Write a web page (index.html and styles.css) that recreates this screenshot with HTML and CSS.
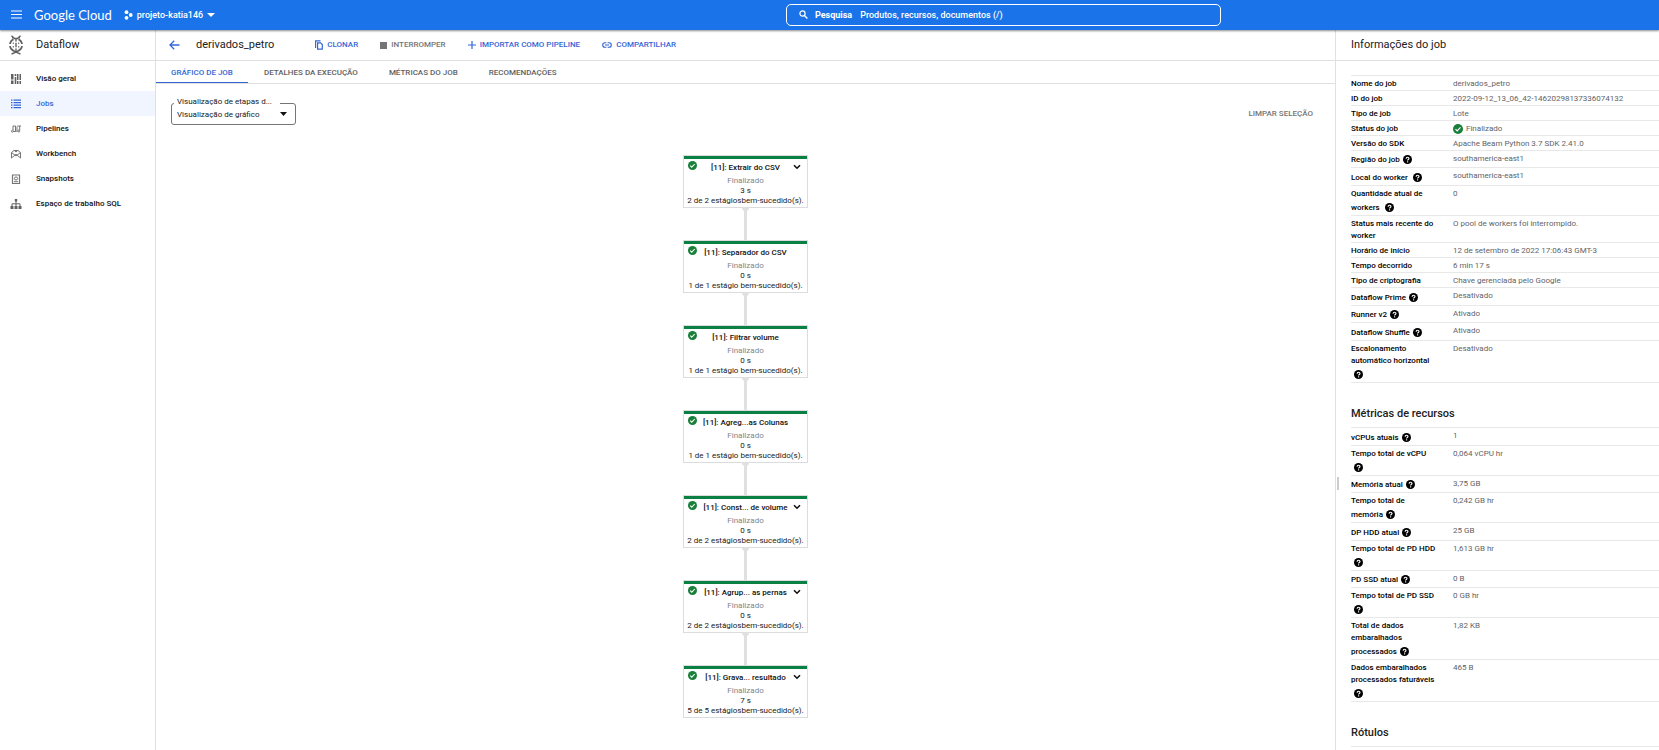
FILE: index.html
```html
<!DOCTYPE html>
<html lang="pt-BR">
<head>
<meta charset="utf-8">
<title>derivados_petro – Dataflow</title>
<link rel="stylesheet" href="styles.css">
</head>
<body>
<svg class="sprite" aria-hidden="true">
  <symbol id="ok" viewBox="0 0 24 24"><circle cx="12" cy="12" r="12" fill="#188038"/><path d="M6 12.500l4 4 8-8.500" fill="none" stroke="#fff" stroke-width="2.800"/></symbol>
  <symbol id="help" viewBox="0 0 24 24"><circle cx="12" cy="12" r="12" fill="#000"/><path d="M8.300 9.800c0-5 7.600-5 7.600-.3 0 2.600-3.700 2.700-3.700 5.300" fill="none" stroke="#fff" stroke-width="3"/><path d="M10.600 16.800h3.200v3h-3.200z" fill="#fff"/></symbol>
  <symbol id="chev" viewBox="0 0 8 6"><path d="M1 1.200l3 3 3-3" fill="none" stroke="#111" stroke-width="1.600"/></symbol>
</svg>
<div class="app">
  <header class="topbar">
    <div class="brand">
      <button class="menu" aria-label="Menu"><svg width="11" height="9" viewBox="0 0 11 9"><path d="M0 1h11M0 4.500h11M0 8h11" stroke="#fff" stroke-width="1.200"/></svg></button>
      <a class="logo" href="#">Google Cloud</a>
      <button class="project">
        <svg width="9" height="10" viewBox="0 0 9 10" fill="#fff"><circle cx="2.500" cy="2.200" r="1.900"/><circle cx="6.700" cy="5" r="1.900"/><circle cx="2.500" cy="7.800" r="1.900"/></svg>
        <span>projeto-katia146</span>
        <svg width="8" height="4" viewBox="0 0 8 4"><path d="M0 0h8L4 4z" fill="#fff"/></svg>
      </button>
    </div>
    <div class="search">
      <svg width="9" height="9" viewBox="0 0 9 9" fill="none" stroke="#fff"><circle cx="3.500" cy="3.500" r="2.600" stroke-width="1.200"/><path d="M5.400 5.400l3 3" stroke-width="1.400"/></svg>
      <label for="q">Pesquisa</label>
      <input id="q" type="text" placeholder="Produtos, recursos, documentos (/)">
    </div>
  </header>
  <div class="body">
    <aside class="sidebar">
      <div class="product">
        <svg width="14" height="20" viewBox="0 0 14 20" fill="none" stroke="#616161"><path d="M2.500.8L5.500 3.500h3L11.500.8M2.500 19.200L10 15.500M11.500 19.200L4 15.500M3 2.800h2M9 2.800h2" stroke-width="1.500"/><path d="M4.500 4.200C2.200 5.400 1.200 7 1 9M1 11c.2 2 1.200 3.600 3.500 4.800M9.500 4.200C11.800 5.400 12.800 7 13 9M13 11c-.2 2-1.200 3.600-3.500 4.800" stroke-width="1.700"/><path d="M7 4v2.500M7 7.800v4.400M7 13.500V16" stroke-width="1.400"/><path d="M4.300 7.500v1.500M4.300 11v1.500M9.700 7.500v1.500M9.700 11v1.500" stroke-width="1"/></svg>
        <span>Dataflow</span>
      </div>
      <nav class="nav">
        <a href="#"><svg width="12" height="12" viewBox="0 0 12 12" fill="#616161"><path d="M1 1h2.500v5.500H1zM1 7.500h2.500V11H1zM4.700 1h1.600v2H4.700zM4.700 4h1.600v7H4.700zM7 1h1.500v6H7zM7 8h1.500v3H7zM9.500 1H11v6H9.500zM9.500 8H11v3H9.500z"/></svg>Visão geral</a>
        <a href="#" class="on" aria-current="page"><svg width="12" height="12" viewBox="0 0 12 12" fill="#3367d6"><path d="M1 1.500h1.500v1.300H1zM1 4h1.500v1.300H1zM1 6.500h1.500v1.300H1zM1 9h1.500v1.300H1zM3.500 1.500H11v1.300H3.500zM3.500 4H11v1.300H3.500zM3.500 6.500H11v1.300H3.500zM3.500 9H11v1.300H3.500z"/></svg>Jobs</a>
        <a href="#"><svg width="12" height="12" viewBox="0 0 12 12" fill="none" stroke="#757575"><path d="M3 7V3h2.500v5.500H3.500M7 9V4.500C7 3.300 7.500 3 8.300 3H11M9.700 3v4M5.500 8.500h1" stroke-width="1"/><circle cx="2.500" cy="8.200" r="1"/><circle cx="8.800" cy="8" r="1"/></svg>Pipelines</a>
        <a href="#"><svg width="12" height="12" viewBox="0 0 12 12" fill="none" stroke="#757575"><path d="M1.500 10V4.500L4 2.500h4l2.500 2V10L6 6.200zM1.500 4.500L6 8l4.500-3.500M4.300 2.500L6 4l1.700-1.500"/></svg>Workbench</a>
        <a href="#"><svg width="12" height="12" viewBox="0 0 12 12" fill="none" stroke="#757575"><path d="M2.500 2h7v8.500h-7z" stroke-width="1.200"/><circle cx="6" cy="5.500" r="1.600"/><path d="M4 8.700h4"/></svg>Snapshots</a>
        <a href="#"><svg width="12" height="12" viewBox="0 0 12 12" fill="#616161"><path d="M4.800 1h2.400v2.500H4.800zM.5 8h3v3h-3zM4.500 8h3v3h-3zM8.500 8h3v3h-3z"/><path d="M6 3v5M2 8V5.800h8V8" fill="none" stroke="#616161"/></svg>Espaço de trabalho SQL</a>
      </nav>
    </aside>
    <main class="main">
      <div class="toolbar">
        <button class="back" aria-label="Voltar"><svg width="11" height="10" viewBox="0 0 11 10" fill="none" stroke="#3367d6" stroke-width="1.300"><path d="M10.500 5H1.200M5.200.8L1 5l4.200 4.200"/></svg></button>
        <h1>derivados_petro</h1>
        <div class="actions">
          <button><svg width="8" height="10" viewBox="0 0 8 10" fill="none" stroke="#3367d6" stroke-width="1.200"><path d="M.6 8V.8h4.900"/><path d="M2.600 2.800h3l1.700 1.700v4.700H2.600z"/></svg>CLONAR</button>
          <button class="muted" disabled><svg width="7" height="7" viewBox="0 0 7 7"><path d="M0 0h7v7H0z" fill="#757575"/></svg>INTERROMPER</button>
          <button><svg width="8" height="8" viewBox="0 0 8 8"><path d="M4 0v8M0 4h8" stroke="#3367d6" stroke-width="1.200"/></svg>IMPORTAR COMO PIPELINE</button>
          <button><svg width="10" height="6" viewBox="0 0 10 6" fill="none" stroke="#3367d6" stroke-width="1.100"><path d="M4.400.7H3a2.300 2.300 0 0 0 0 4.600h1.400M5.600.7H7a2.300 2.300 0 0 1 0 4.600H5.600M3 3h4"/></svg>COMPARTILHAR</button>
        </div>
      </div>
      <nav class="tabs">
        <a href="#" class="on">GRÁFICO DE JOB</a><a href="#">DETALHES DA EXECUÇÃO</a><a href="#">MÉTRICAS DO JOB</a><a href="#">RECOMENDAÇÕES</a>
      </nav>
      <div class="controls">
        <div class="field">
          <label for="view">Visualização de etapas d...</label>
          <select id="view"><option>Visualização de gráfico</option></select>
          <svg width="7" height="4" viewBox="0 0 7 4"><path d="M0 0h7L3.500 4z" fill="#111"/></svg>
        </div>
        <button class="clear">LIMPAR SELEÇÃO</button>
      </div>
      <ol class="graph">
        <li class="node"><svg class="st"><use href="#ok"/></svg><h2>[11]: Extrair do CSV</h2><button class="exp" aria-label="Expandir"><svg><use href="#chev"/></svg></button><p class="state">Finalizado</p><p>3 s</p><p>2 de 2 estágiosbem-sucedido(s).</p></li>
        <li class="node"><svg class="st"><use href="#ok"/></svg><h2>[11]: Separador do CSV</h2><p class="state">Finalizado</p><p>0 s</p><p>1 de 1 estágio bem-sucedido(s).</p></li>
        <li class="node"><svg class="st"><use href="#ok"/></svg><h2>[11]: Filtrar volume</h2><p class="state">Finalizado</p><p>0 s</p><p>1 de 1 estágio bem-sucedido(s).</p></li>
        <li class="node"><svg class="st"><use href="#ok"/></svg><h2>[11]: Agreg...as Colunas</h2><p class="state">Finalizado</p><p>0 s</p><p>1 de 1 estágio bem-sucedido(s).</p></li>
        <li class="node"><svg class="st"><use href="#ok"/></svg><h2>[11]: Const... de volume</h2><button class="exp" aria-label="Expandir"><svg><use href="#chev"/></svg></button><p class="state">Finalizado</p><p>0 s</p><p>2 de 2 estágiosbem-sucedido(s).</p></li>
        <li class="node"><svg class="st"><use href="#ok"/></svg><h2>[11]: Agrup... as pernas</h2><button class="exp" aria-label="Expandir"><svg><use href="#chev"/></svg></button><p class="state">Finalizado</p><p>0 s</p><p>2 de 2 estágiosbem-sucedido(s).</p></li>
        <li class="node"><svg class="st"><use href="#ok"/></svg><h2>[11]: Grava... resultado</h2><button class="exp" aria-label="Expandir"><svg><use href="#chev"/></svg></button><p class="state">Finalizado</p><p>7 s</p><p>5 de 5 estágiosbem-sucedido(s).</p></li>
      </ol>
    </main>
    <aside class="info">
      <div class="handle"></div>
      <h2 class="info-title">Informações do job</h2>
      <div class="info-body">
        <table>
          <tr><th scope="row">Nome do job</th><td>derivados_petro</td></tr>
          <tr><th scope="row">ID do job</th><td>2022-09-12_13_06_42-14620298137336074132</td></tr>
          <tr><th scope="row">Tipo de job</th><td>Lote</td></tr>
          <tr><th scope="row">Status do job</th><td><span class="done"><svg><use href="#ok"/></svg>Finalizado</span></td></tr>
          <tr><th scope="row">Versão do SDK</th><td>Apache Beam Python 3.7 SDK 2.41.0</td></tr>
          <tr class="tight"><th scope="row">Região do job<svg class="help"><use href="#help"/></svg></th><td>southamerica-east1</td></tr>
          <tr><th scope="row">Local do worker <svg class="help"><use href="#help"/></svg></th><td>southamerica-east1</td></tr>
          <tr><th scope="row">Quantidade atual de workers <svg class="help"><use href="#help"/></svg></th><td>0</td></tr>
          <tr><th scope="row">Status mais recente do worker</th><td>O pool de workers foi interrompido.</td></tr>
          <tr><th scope="row">Horário de início</th><td>12 de setembro de 2022 17:06:43 GMT-3</td></tr>
          <tr><th scope="row">Tempo decorrido</th><td>6 min 17 s</td></tr>
          <tr><th scope="row">Tipo de criptografia</th><td>Chave gerenciada pelo Google</td></tr>
          <tr><th scope="row">Dataflow Prime<svg class="help"><use href="#help"/></svg></th><td>Desativado</td></tr>
          <tr class="tight"><th scope="row">Runner v2<svg class="help"><use href="#help"/></svg></th><td>Ativado</td></tr>
          <tr><th scope="row">Dataflow Shuffle<svg class="help"><use href="#help"/></svg></th><td>Ativado</td></tr>
          <tr><th scope="row">Escalonamento automático horizontal <svg class="help"><use href="#help"/></svg></th><td>Desativado</td></tr>
        </table>
        <h3>Métricas de recursos</h3>
        <table>
          <tr><th scope="row">vCPUs atuais<svg class="help"><use href="#help"/></svg></th><td>1</td></tr>
          <tr><th scope="row">Tempo total de vCPU <svg class="help"><use href="#help"/></svg></th><td>0,064 vCPU hr</td></tr>
          <tr class="tight"><th scope="row">Memória atual<svg class="help"><use href="#help"/></svg></th><td>3,75 GB</td></tr>
          <tr><th scope="row">Tempo total de memória<svg class="help"><use href="#help"/></svg></th><td>0,242 GB hr</td></tr>
          <tr><th scope="row">DP HDD atual<svg class="help"><use href="#help"/></svg></th><td>25 GB</td></tr>
          <tr><th scope="row">Tempo total de PD HDD <svg class="help"><use href="#help"/></svg></th><td>1,613 GB hr</td></tr>
          <tr class="tight"><th scope="row">PD SSD atual<svg class="help"><use href="#help"/></svg></th><td>0 B</td></tr>
          <tr><th scope="row">Tempo total de PD SSD <svg class="help"><use href="#help"/></svg></th><td>0 GB hr</td></tr>
          <tr><th scope="row">Total de dados embaralhados processados<svg class="help"><use href="#help"/></svg></th><td>1,82 KB</td></tr>
          <tr><th scope="row">Dados embaralhados processados faturáveis <svg class="help"><use href="#help"/></svg></th><td>465 B</td></tr>
        </table>
        <h3 class="last">Rótulos</h3>
      </div>
    </aside>
  </div>
</div>
</body>
</html>
```
FILE: styles.css
```css
* { box-sizing: border-box; }
body { margin: 0; font: 400 8px/12px Roboto, "Liberation Sans", sans-serif; color: #212121; background: #fff; }
h1, h2, h3, p, ol { margin: 0; padding: 0; font-weight: 400; }
a { color: inherit; text-decoration: none; }
button { border: 0; padding: 0; background: none; color: inherit; font: inherit; cursor: pointer; }
svg { flex: none; display: block; }
.sprite { position: absolute; width: 0; height: 0; }
.app { display: flex; flex-direction: column; height: 100vh; overflow: hidden; }

.topbar { position: relative; z-index: 1; flex: none; display: grid; grid-template-columns: 786fr 435fr 438fr; align-items: center; height: 30px; padding-bottom: 1px; background: #1a73e8; color: #fff; box-shadow: 0 1px 2px rgba(0, 0, 0, .45); }
.brand { display: flex; align-items: center; padding-left: 11px; }
.logo { margin-left: 12px; font: 400 13px/20px Lato, sans-serif; }
.project { display: flex; align-items: center; gap: 4px; margin-left: 12px; font-size: 9px; font-weight: 500; }
.search { display: flex; align-items: center; height: 22px; padding-left: 12px; border: 1px solid #fff; border-radius: 5px; font-size: 9px; font-weight: 500; }
.search label { margin: 0 8px 0 7px; font-weight: 700; }
.search input { flex: 1; min-width: 0; padding: 0; border: 0; outline: 0; background: none; color: #fff; font: inherit; }
.search input::placeholder { color: #fff; opacity: 1; }

.body { flex: 1; display: flex; min-height: 0; }
.sidebar { flex: none; width: 156px; border-right: 1px solid #e0e0e0; }
.product { display: flex; align-items: center; gap: 13px; height: 31px; padding-left: 9px; border-bottom: 1px solid #e0e0e0; font-size: 11px; }
.nav { padding-top: 5px; font-weight: 500; color: #111; }
.nav a { display: flex; align-items: center; gap: 14px; height: 25px; padding-left: 10px; }
.nav .on { background: #f0f5ff; color: #3367d6; }

.main { flex: 1; min-width: 0; }
.toolbar { display: flex; align-items: center; height: 31px; padding: 0 13px; border-bottom: 1px solid #e0e0e0; }
.toolbar h1 { margin-left: 16px; font-size: 11px; }
.actions { display: flex; gap: 22px; margin-left: 41px; color: #3367d6; font-weight: 500; }
.actions button { display: flex; align-items: center; gap: 4px; }
.actions .muted { color: #757575; }
.tabs { display: flex; gap: 1px; height: 23px; border-bottom: 1px solid #e0e0e0; color: #616161; font-weight: 500; line-height: 23px; }
.tabs a { height: 22px; padding: 0 15px; }
.tabs .on { color: #3367d6; border-bottom: 1px solid #3367d6; }
.controls { display: flex; justify-content: space-between; align-items: center; padding: 19px 22px 0 15px; }
.field { position: relative; width: 125px; }
.field label { position: absolute; top: -6px; left: 3px; padding: 0 8px 0 3px; background: #fff; line-height: 10px; }
.field select { display: block; width: 100%; height: 22px; padding: 1px 5px 0; border: 1px solid #757575; border-radius: 3px; background: #fff; color: #212121; font: inherit; appearance: none; }
.field svg { position: absolute; right: 9px; top: 9px; pointer-events: none; }
.clear { color: #757575; font-weight: 500; }

.graph { display: flex; flex-direction: column; align-items: center; gap: 32px; padding-top: 30px; list-style: none; text-align: center; }
.node { position: relative; width: 125px; height: 53px; border: 1px solid #dadce0; line-height: 10px; background: #fff; color: #212121; }
.node h2 { padding-top: 2px; border-top: 3px solid #0b8043; font-size: 8px; font-weight: 500; line-height: 14px; color: #111; }
.node .state { padding-top: 1px; color: #80868b; }
.st { position: absolute; left: 4px; top: 5px; width: 9px; height: 9px; }
.exp { position: absolute; right: 6px; top: 8px; }
.exp svg { width: 8px; height: 6px; }
.node:not(:last-child)::before { content: ""; position: absolute; left: 50%; top: 100%; width: 3px; height: 33px; margin-left: -2px; background: #e0e0e0; }
.node:not(:last-child)::after { content: ""; position: absolute; left: 50%; top: 100%; width: 7px; height: 4px; margin-left: -4px; border-radius: 0 0 4px 4px; background: #e0e0e0; }

.info { position: relative; flex: none; width: 324px; border-left: 1px solid #e0e0e0; }
.handle { position: absolute; left: 1px; top: 447px; width: 2px; height: 13px; background: #ccc; }
.info-title { height: 31px; padding-left: 15px; border-bottom: 1px solid #e0e0e0; font-size: 11px; line-height: 30px; }
.info-body { padding: 14px 0 0 15px; }
.info table { width: 100%; border-collapse: separate; border-spacing: 0; border-top: 1px solid #e8e8e8; table-layout: fixed; }
.info th, .info td { padding: 2px 0 0; border-bottom: 1px solid #e8e8e8; text-align: left; vertical-align: top; }
.info th { width: 102px; padding-right: 15px; color: #000; font-weight: 500; }
.info td { color: #5f6368; }
.help { display: inline-block; width: 9px; height: 9px; margin: 3px 0 3px 3px; vertical-align: middle; }
.tight .help { margin-top: 2px; }
.done { display: flex; align-items: center; gap: 3px; }
.done svg { width: 10px; height: 10px; }
.info h3 { padding: 20px 0 3px; font-size: 11px; font-weight: 500; line-height: 21px; color: #212121; }
.info .last { border-bottom: 1px solid #e8e8e8; }
```
